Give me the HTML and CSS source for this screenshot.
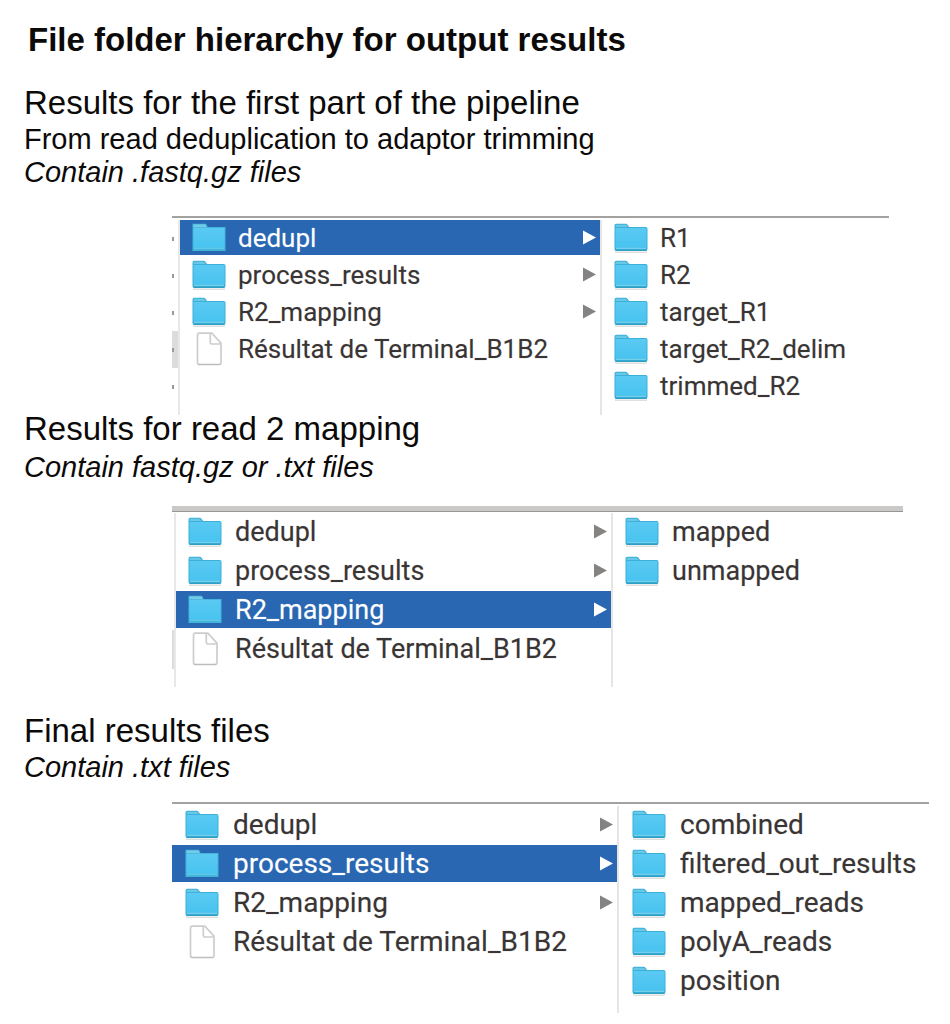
FILE: index.html
```html
<!DOCTYPE html>
<html lang="en">
<head>
<meta charset="utf-8">
<meta name="viewport" content="width=device-width, initial-scale=1">
<title>File folder hierarchy for output results</title>
<link rel="stylesheet" href="styles.css">
</head>
<body>
<svg class="defs" aria-hidden="true">
  <defs>
    <linearGradient id="face" x1="0" y1="0" x2="0" y2="1">
      <stop offset="0" stop-color="#5acaf2"/>
      <stop offset="1" stop-color="#48c3f0"/>
    </linearGradient>
    <symbol id="folder" viewBox="0 0 34 30">
      <path class="shadow" d="M1 29.2h32" stroke="#dcdcdc" stroke-width="1.4"/>
      <path d="M.5 26V2.5Q.5 .8 2.2 .8h9.6q1 0 1.7 1l1.6 2.2h16.700q1.700 0 1.700 1.700V26q0 2-2 2h-29q-2 0-2-2z" fill="#3cb0d8"/>
      <path d="M1.500 3Q1.500 1.800 2.700 1.800h8.900q.8 0 1.300.9l.9 1.400H1.500z" fill="#68c8e6"/>
      <path d="M1.500 5h31v19.500h-31z" fill="url(#face)"/>
      <path d="M2 25.200h30" stroke="#8cdcf6" stroke-width="1"/>
      <path d="M1.500 27.300h31" stroke="#2c9fc2" stroke-width="1.200"/>
    </symbol>
    <symbol id="folder-open" viewBox="0 0 34 30">
      <path d="M.5 28V.8H14l1.600 3.200h17.900V28z" fill="#43b4da"/>
      <path d="M1.500 1.500H13.500l1.400 2.700H1.500z" fill="#74cbe8"/>
      <path d="M1.500 5h31v19.500h-31z" fill="url(#face)"/>
      <path d="M2 25.200h30" stroke="#6dd0ee" stroke-width="1"/>
    </symbol>
    <symbol id="file" viewBox="0 0 34 34">
      <path d="M7.500 1.200h12.300l9.200 10v19.300q0 2-2 2H7.500q-2 0-2-2V3.200q0-2 2-2z" fill="#fff" stroke="#cfcdcc" stroke-width="1.700"/>
      <path d="M18.300 2v8.500q0 1.500 1.500 1.500h8.500" fill="none" stroke="#cfcdcc" stroke-width="1.700"/>
      <path d="M6.500 32.500h21" stroke="#bfbdbc" stroke-width="1.200"/>
    </symbol>
    <symbol id="arrow" viewBox="0 0 13 15"><path d="M0 .5 13 7.500 0 14.500z" fill="currentColor"/></symbol>
  </defs>
</svg>
<main class="page">
  <h1 class="title">File folder hierarchy for output results</h1>

  <section class="part">
    <h2 class="heading">Results for the first part of the pipeline</h2>
    <p class="text intro">From read deduplication to adaptor trimming</p>
    <p class="text note">Contain .fastq.gz files</p>
    <div class="browser first">
      <div class="edge"><i></i><i></i><i></i><i class="shaded"></i><i></i></div>
      <ul class="column">
        <li class="row selected"><svg class="icon"><use href="#folder-open"/></svg><span class="name">dedupl</span><svg class="arrow"><use href="#arrow"/></svg></li>
        <li class="row"><svg class="icon"><use href="#folder"/></svg><span class="name">process_results</span><svg class="arrow"><use href="#arrow"/></svg></li>
        <li class="row"><svg class="icon"><use href="#folder"/></svg><span class="name">R2_mapping</span><svg class="arrow"><use href="#arrow"/></svg></li>
        <li class="row"><svg class="icon file"><use href="#file"/></svg><span class="name">Résultat de Terminal_B1B2</span></li>
      </ul>
      <ul class="column">
        <li class="row"><svg class="icon"><use href="#folder"/></svg><span class="name">R1</span></li>
        <li class="row"><svg class="icon"><use href="#folder"/></svg><span class="name">R2</span></li>
        <li class="row"><svg class="icon"><use href="#folder"/></svg><span class="name">target_R1</span></li>
        <li class="row"><svg class="icon"><use href="#folder"/></svg><span class="name">target_R2_delim</span></li>
        <li class="row"><svg class="icon"><use href="#folder"/></svg><span class="name">trimmed_R2</span></li>
      </ul>
    </div>
  </section>

  <section class="part mapping">
    <h2 class="heading">Results for read 2 mapping</h2>
    <p class="text note">Contain fastq.gz or .txt files</p>
    <div class="browser second">
      <div class="edge"><i></i><i></i><i></i><i class="shaded"></i></div>
      <ul class="column">
        <li class="row"><svg class="icon"><use href="#folder"/></svg><span class="name">dedupl</span><svg class="arrow"><use href="#arrow"/></svg></li>
        <li class="row"><svg class="icon"><use href="#folder"/></svg><span class="name">process_results</span><svg class="arrow"><use href="#arrow"/></svg></li>
        <li class="row selected"><svg class="icon"><use href="#folder-open"/></svg><span class="name">R2_mapping</span><svg class="arrow"><use href="#arrow"/></svg></li>
        <li class="row"><svg class="icon file"><use href="#file"/></svg><span class="name">Résultat de Terminal_B1B2</span></li>
      </ul>
      <ul class="column">
        <li class="row"><svg class="icon"><use href="#folder"/></svg><span class="name">mapped</span></li>
        <li class="row"><svg class="icon"><use href="#folder"/></svg><span class="name">unmapped</span></li>
      </ul>
    </div>
  </section>

  <section class="part final">
    <h2 class="heading">Final results files</h2>
    <p class="text note">Contain .txt files</p>
    <div class="browser third">
      <ul class="column">
        <li class="row"><svg class="icon"><use href="#folder"/></svg><span class="name">dedupl</span><svg class="arrow"><use href="#arrow"/></svg></li>
        <li class="row selected"><svg class="icon"><use href="#folder-open"/></svg><span class="name">process_results</span><svg class="arrow"><use href="#arrow"/></svg></li>
        <li class="row"><svg class="icon"><use href="#folder"/></svg><span class="name">R2_mapping</span><svg class="arrow"><use href="#arrow"/></svg></li>
        <li class="row"><svg class="icon file"><use href="#file"/></svg><span class="name">Résultat de Terminal_B1B2</span></li>
      </ul>
      <ul class="column">
        <li class="row"><svg class="icon"><use href="#folder"/></svg><span class="name">combined</span></li>
        <li class="row"><svg class="icon"><use href="#folder"/></svg><span class="name">filtered_out_results</span></li>
        <li class="row"><svg class="icon"><use href="#folder"/></svg><span class="name">mapped_reads</span></li>
        <li class="row"><svg class="icon"><use href="#folder"/></svg><span class="name">polyA_reads</span></li>
        <li class="row"><svg class="icon"><use href="#folder"/></svg><span class="name">position</span></li>
      </ul>
    </div>
  </section>
</main>
</body>
</html>
```
FILE: styles.css
```css
* { box-sizing: border-box; }
body {
  margin: 0;
  background: #fff;
  color: #0c0a09;
  font-family: "Liberation Sans", Arial, sans-serif;
}
.defs { position: absolute; width: 0; height: 0; }
.page { padding: 20px 20px 10px 24px; }
.title {
  margin: 0 0 23px;
  padding-left: 4px;
  font-size: 33px;
  line-height: 40px;
  font-weight: 700;
}
.heading {
  margin: 0;
  font-size: 33px;
  line-height: 39px;
  font-weight: 400;
}
.text {
  margin: 0;
  font-size: 29px;
  line-height: 33px;
}
.intro { padding-top: 1px; }
.note { font-style: italic; }
.mapping { margin-top: -6px; }
.mapping .note { padding-top: 3px; }
.final { margin-top: 24px; }
.final .note { padding-top: 1px; }

/* Column browser */
.browser {
  display: grid;
  margin-left: 148px;
  border-top: 2px solid #a3a2a1;
  color: #393534;
  font-family: Roboto, "Noto Sans", sans-serif;
  -webkit-text-stroke: 1px transparent;
}
.column {
  margin: 0;
  padding: 0;
  list-style: none;
}
.column + .column { border-left: 2px solid #e6e5e5; }
.row {
  display: flex;
  align-items: center;
  gap: 13px;
  height: 39px;
  padding: 0 4px 0 12px;
  border-bottom: 2px solid transparent;
  background-clip: padding-box;
}
.row.selected { background-color: #2967b2; color: #fff; }
.name {
  flex: 1;
  white-space: nowrap;
  -webkit-text-stroke: thin;
  -webkit-text-stroke-color: color-mix(in srgb, currentColor 30%, transparent);
}
.icon { flex: none; width: 34px; height: 30px; }
.icon.file { height: 34px; }
.arrow { flex: none; width: 13px; height: 15px; color: #858382; }
.selected .arrow { color: #fff; }
.edge { border-right: 2px solid #e9e8e8; }
.edge i { display: flex; align-items: center; height: 37px; }
.edge .shaded { background: #dddcdb content-box; }

.first {
  grid-template-columns: 8px 420fr 289fr;
  min-height: 199px;
  margin-top: 27px;
  margin-right: 41px;
  padding-top: 2px;
  font-size: 26px;
}
.first .row { height: 37px; gap: 12px; }
.first .edge i::before { content: ""; width: 2px; height: 4px; background: #9b9998; }
.second {
  grid-template-columns: 4px 435fr 292fr;
  min-height: 181px;
  margin-top: 22px;
  margin-right: 27px;
  border-top: 5px solid #cbc9c7;
  box-shadow: inset 0 1px #989695;
  padding-top: 2px;
  font-size: 27px;
}
.second .edge i { height: 39px; }
.third {
  grid-template-columns: 445fr 312fr;
  min-height: 211px;
  margin-top: 18px;
  margin-right: 1px;
  padding-top: 2px;
  font-size: 28px;
}
.third .row { padding-left: 13px; gap: 14px; }
```
